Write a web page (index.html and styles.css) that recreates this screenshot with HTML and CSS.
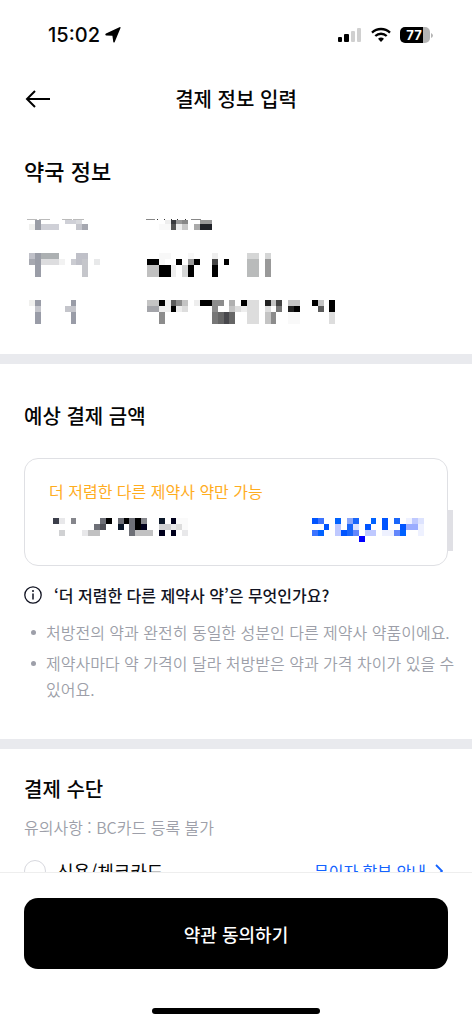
FILE: index.html
```html
<!DOCTYPE html>
<html lang="ko">
<head>
<meta charset="utf-8">
<meta name="viewport" content="width=device-width, initial-scale=1">
<title>결제 정보 입력</title>
<link rel="stylesheet" href="styles.css">
</head>
<body>
<div class="status">
  <div class="status-left">
    <span class="time">15:02</span>
    <svg width="16" height="16" viewBox="0 0 16 16" aria-hidden="true"><path d="M15.600.8 9.700 15Q9 16.200 8.300 15L7.400 8.800 1 8.400Q-.4 7.600 1 6.600L14.400.2Q15.800-.2 15.600.8Z"/></svg>
  </div>
  <div class="status-right">
    <svg width="24" height="16" viewBox="0 0 24 16" aria-hidden="true"><rect x="0" y="10" width="4" height="5" rx="1"/><rect x="6" y="7" width="5" height="8" rx="1"/><rect x="13" y="4" width="4" height="11" rx="1" fill="#d0d0d0"/><rect x="19" y="1" width="4" height="14" rx="1" fill="#d0d0d0"/></svg>
    <svg class="wifi" width="20" height="16" viewBox="0 0 20 16" fill="none" stroke="#000" stroke-width="2.3" aria-hidden="true"><path d="M1 5.6a13 13 0 0 1 18 0M4.3 9a8.3 8.3 0 0 1 11.4 0"/><path d="M7 11.8a4.5 4.5 0 0 1 6 0L10 15Z" fill="#000" stroke="none"/></svg>
    <div class="battery"><span>77</span></div>
    <svg width="2" height="5" viewBox="0 0 2 5" aria-hidden="true"><path d="M0 0q2 1 2 2.500T0 5Z" fill="#b5b5b5"/></svg>
  </div>
</div>
<header class="nav">
  <button class="back" type="button" aria-label="뒤로"><svg width="26" height="18" viewBox="0 0 26 18" fill="none" stroke="#000" stroke-width="2" aria-hidden="true"><path d="M25 9H2M10 1 2 9l8 8"/></svg></button>
  <h1>결제 정보 입력</h1>
</header>
<main>
  <section class="pharmacy">
    <h2 class="large">약국 정보</h2>
    <dl>
      <div>
        <dt><svg class="mosaic" width="120" height="24" viewBox="0 0 120 24" aria-hidden="true">
          <path fill="#bbb" d="M3 13h10v1H3zM15 13h11v1H15zM38 13h10v1H38zM49 13h11v1H49z"/>
          <path fill="#9a9da6" d="M11 14h6v10h-6z"/><path fill="#cfd0d7" d="M41 14h11v4H41zM17 18h18v6H17z"/><path fill="#d8d9dd" d="M52 14h6v4h-6z"/><path fill="#f0f0ef" d="M5 18h6v6H5z"/><path fill="#c4c5cc" d="M52 18h6v6h-6z"/><path fill="#a5a7b0" d="M58 18h6v6h-6z"/>
        </svg></dt>
        <dd><svg class="mosaic" width="200" height="24" viewBox="0 0 200 24" aria-hidden="true">
          <path fill="#888" d="M2 13h9v1H2zM47 13h10v1H47z"/><path fill="#333" d="M13 13h1v1h-1zM20 13h1v1h-1zM27 13h1v1h-1zM33 13h1v1h-1zM41 13h1v1h-1z"/>
          <path fill="#eee" d="M21 14h6v4h-6zM32 18h6v6h-6z"/><path fill="#38393d" d="M27 14h5v4h-5z"/><path fill="#999" d="M32 14h6v4h-6zM56 14h12v4H56z"/><path fill="#888" d="M38 14h6v4h-6z"/><path fill="#f9f9f9" d="M15 18h12v6H15z"/><path fill="#555" d="M27 18h5v6h-5z"/><path fill="#c8c8c8" d="M38 18h6v6h-6z"/><path fill="#aaa" d="M50 18h6v6h-6z"/><path fill="#202228" d="M56 18h12v6H56z"/>
        </svg></dd>
      </div>
      <div>
        <dt><svg class="mosaic" width="120" height="24" viewBox="0 0 120 24" aria-hidden="true">
          <path fill="#bfc0c8" d="M5 0h6v6H5zM52 0h12v6H52zM52 6h6v6h-6z"/><path fill="#9a9da7" d="M11 0h6v24h-6z"/><path fill="#acb0b2" d="M17 0h18v6H17z"/><path fill="#a6a8b0" d="M5 6h6v6H5z"/><path fill="#dddddf" d="M17 6h18v6H17z"/><path fill="#f2f2f2" d="M35 6h6v6h-6z"/><path fill="#cbccd2" d="M47 6h5v6h-5z"/><path fill="#c5c6cb" d="M58 6h6v18h-6z"/><path fill="#e8e9ea" d="M70 6h6v6h-6z"/>
        </svg></dt>
        <dd><svg class="mosaic" width="200" height="24" viewBox="0 0 200 24" aria-hidden="true">
          <path fill="#f8f8f8" d="M15 0h12v6H15zM44 0h6v6h-6zM15 6h6v6h-6z"/><path fill="#eee" d="M68 0h6v6h-6zM27 12h5v12h-5z"/><path fill="#d5d6d6" d="M103 0h12v6h-12zM121 0h6v6h-6zM38 12h6v12h-6z"/>
          <path d="M3 6h12v6H3zM32 6h6v6h-6zM50 6h6v6h-6zM80 6h5v6h-5zM15 12h12v12H15zM44 12h6v12h-6zM68 12h6v12h-6z"/><path fill="#999" d="M44 6h6v6h-6zM121 6h6v18h-6z"/><path fill="#444" d="M68 6h6v6h-6z"/><path fill="#b9bbbb" d="M103 6h12v18h-12z"/><path fill="#c0c0c0" d="M3 12h12v12H3z"/>
        </svg></dd>
      </div>
      <div>
        <dt><svg class="mosaic" width="120" height="24" viewBox="0 0 120 24" aria-hidden="true">
          <path fill="#f0f0ee" d="M5 0h6v6H5z"/><path fill="#999ca7" d="M11 0h6v6h-6zM47 0h5v6h-5zM11 12h6v12h-6zM47 12h5v12h-5z"/><path fill="#c4c5cb" d="M11 6h6v6h-6zM41 6h11v6H41z"/>
        </svg></dt>
        <dd><svg class="mosaic" width="200" height="24" viewBox="0 0 200 24" aria-hidden="true">
          <path fill="#c4c4c4" d="M3 0h12v6H3zM38 0h6v6h-6zM127 0h5v6h-5zM144 0h12v6h-12zM174 0h6v6h-6zM85 6h6v6h-6zM121 12h6v12h-6z"/>
          <path d="M15 0h6v6h-6zM56 0h12v6H56zM97 0h6v6h-6zM168 0h6v6h-6zM185 0h6v12h-6zM27 6h5v6h-5zM150 6h6v6h-6z"/>
          <path fill="#eee" d="M21 0h6v6h-6zM50 0h6v6h-6zM15 6h12v6H15zM32 6h6v6h-6zM97 6h6v6h-6z"/><path fill="#5c5c5c" d="M27 0h5v6h-5zM174 6h6v6h-6z"/><path fill="#8c8c8c" d="M32 0h6v6h-6zM68 0h6v12h-6zM74 0h6v6h-6zM15 12h6v12h-6zM127 12h5v12h-5z"/><path fill="#b0b0b0" d="M85 0h6v6h-6z"/><path fill="#ddd" d="M103 0h12v24h-12zM38 6h6v6h-6zM91 6h6v6h-6zM121 6h6v6h-6zM185 12h6v12h-6z"/><path fill="#222" d="M121 0h6v6h-6zM144 6h6v6h-6z"/><path fill="#444" d="M132 0h6v6h-6z"/><path fill="#a4a5aa" d="M3 6h12v6H3z"/><path fill="#777" d="M132 6h6v6h-6zM68 12h6v12h-6z"/><path fill="#666" d="M74 12h6v12h-6zM85 12h6v12h-6z"/><path fill="#48484c" d="M80 12h5v12h-5z"/><path fill="#f9f9f9" d="M144 12h12v12h-12z"/>
        </svg></dd>
      </div>
    </dl>
  </section>
  <section class="amount">
    <h2>예상 결제 금액</h2>
    <div class="card">
      <p class="notice">더 저렴한 다른 제약사 약만 가능</p>
      <div class="price">
        <svg class="mosaic" width="140" height="24" viewBox="49 0 140 24" aria-hidden="true">
          <path fill="#3c3f4b" d="M53 0h6v6h-6z"/><path fill="#e8e8ea" d="M59 0h6v6h-6zM171 6h5v6h-5zM82 12h6v6h-6zM182 12h6v6h-6z"/><path fill="#85868c" d="M71 0h5v6h-5zM141 0h6v6h-6z"/><path fill="#6e7077" d="M100 0h6v6h-6zM118 0h6v6h-6zM129 0h6v18h-6zM94 6h6v6h-6z"/><path d="M106 0h6v6h-6zM124 0h5v6h-5zM135 0h6v12h-6z"/><path fill="#0b1729" d="M159 0h6v6h-6zM118 6h6v6h-6z"/><path fill="#00001c" d="M171 0h5v6h-5zM141 6h6v6h-6zM159 12h6v6h-6zM171 12h5v6h-5z"/><path fill="#505158" d="M100 6h6v6h-6z"/><path fill="#d0d1d3" d="M159 6h12v6h-12zM59 12h6v6h-6z"/><path fill="#ddd" d="M176 6h6v6h-6z"/><path fill="#c1c1c2" d="M88 12h12v6H88zM135 12h18v6h-18z"/><path fill="#fafafa" d="M182 0h6v12h-6zM176 0h6v6h-6z"/>
        </svg>
        <svg class="mosaic" width="112" height="24" viewBox="312 0 112 24" aria-hidden="true">
          <path fill="#0054ff" d="M312 0h6v6h-6zM382 0h6v12h-6zM324 6h5v6h-5zM365 6h6v6h-6zM400 6h6v6h-6zM341 12h6v6h-6z"/><path fill="#3c74ff" d="M318 0h6v6h-6zM312 12h6v6h-6z"/><path fill="#0062ff" d="M335 0h6v6h-6zM371 0h5v6h-5zM318 12h6v6h-6zM400 12h6v6h-6z"/><path fill="#8ea8f8" d="M347 0h6v6h-6z"/><path fill="#1a66fa" d="M353 0h6v6h-6zM394 0h6v6h-6zM347 6h6v12h-6z"/><path fill="#eef1ff" d="M406 0h6v6h-6zM418 6h6v12h-6zM382 12h12v6h-12z"/><path fill="#bfc9ff" d="M412 0h6v6h-6zM335 6h6v12h-6zM365 12h11v6h-11z"/><path fill="#dde3fe" d="M418 0h6v6h-6zM353 6h6v6h-6z"/><path fill="#9aacff" d="M406 6h12v6h-12z"/><path fill="#6286fc" d="M353 12h6v6h-6zM394 12h6v6h-6z"/><path fill="#00f" d="M359 18h6v6h-6z"/>
        </svg>
      </div>
      <span class="handle"></span>
    </div>
    <h3><svg width="18" height="18" viewBox="0 0 18 18" fill="none" stroke="#111322" stroke-width="1.300" aria-hidden="true"><circle cx="9" cy="9" r="8.200"/><path d="M9 7.500v6" stroke-width="1.500"/><circle cx="9" cy="5" r="1" fill="#111322" stroke="none"/></svg>‘더 저렴한 다른 제약사 약’은 무엇인가요?</h3>
    <ul>
      <li>처방전의 약과 완전히 동일한 성분인 다른 제약사 약품이에요.</li>
      <li>제약사마다 약 가격이 달라 처방받은 약과 가격 차이가 있을 수 있어요.</li>
    </ul>
  </section>
  <section class="method">
    <h2>결제 수단</h2>
    <p class="caution">유의사항 : BC카드 등록 불가</p>
    <div class="option">
      <input type="radio" name="method" id="credit">
      <label for="credit">신용/체크카드</label>
      <a href="#installment">무이자 할부 안내<svg width="8" height="14" viewBox="0 0 8 14" fill="none" stroke="#1463ff" stroke-width="1.800" aria-hidden="true"><path d="m1 1 6 6-6 6"/></svg></a>
    </div>
  </section>
</main>
<footer>
  <button class="agree" type="button">약관 동의하기</button>
  <div class="home"></div>
</footer>
</body>
</html>
```
FILE: styles.css
```css
* { box-sizing: border-box; margin: 0; padding: 0; }
body {
  display: flex;
  flex-direction: column;
  height: 100vh;
  background: #fff;
  color: #050505;
  font-family: "Noto Sans CJK KR", sans-serif;
  font-size: 16px;
  line-height: 24px;
}
svg { display: block; flex: none; }
button { border: 0; background: none; font: inherit; cursor: pointer; }

.status {
  display: flex;
  justify-content: space-between;
  flex: none;
  height: 70px;
  padding: 23px 39px 0 48px;
}
.status-left, .status-right { display: flex; align-items: center; height: 24px; }
.status-left { gap: 5px; }
.time { font-family: Inter, sans-serif; font-size: 20px; font-weight: 500; }
.wifi { margin: 0 9px; }
.battery {
  width: 30px;
  height: 16px;
  padding-right: 2px;
  border-radius: 5px;
  background: linear-gradient(to right, #000 77%, #b5b5b5 77%);
  color: #fff;
  font: 700 13px/16px Inter, sans-serif;
  text-align: center;
}
.battery + svg { margin-left: 1px; }

.nav {
  display: grid;
  grid-template-columns: 28px 1fr 28px;
  align-items: center;
  flex: none;
  height: 58px;
  padding: 0 24px;
}
.back { padding: 4px 0 4px 1px; }
h1 { font-size: 20px; font-weight: 500; line-height: 32px; text-align: center; }

main { flex: 1; min-height: 0; overflow: hidden; }
section { padding: 0 24px; }
section + section { border-top: 10px solid #e9eaee; }
h2 { font-size: 20px; font-weight: 500; line-height: 32px; }
.large { font-size: 22px; }

.pharmacy { padding-top: 26px; padding-bottom: 30px; }
dl { display: grid; gap: 23px; margin-top: 20px; }
dl > div { display: grid; grid-template-columns: 120px 1fr; }
.mosaic { shape-rendering: crispEdges; }

.amount { padding-top: 36px; padding-bottom: 37px; }
.card {
  position: relative;
  margin-top: 26px;
  padding: 20px 23px 23px 24px;
  border: 1px solid #dfe0e4;
  border-radius: 14px;
}
.notice { color: #ffad1f; }
.price { display: flex; justify-content: space-between; margin-top: 15px; }
.handle { position: absolute; top: 51px; right: -6px; width: 6px; height: 41px; background: #e0e0e5; }
h3 {
  display: flex;
  align-items: center;
  gap: 12px;
  margin-top: 17px;
  color: #111322;
  font-size: 16px;
  font-weight: 500;
}
ul { display: grid; gap: 5px; margin: 12px -12px 0 0; list-style: none; }
li { display: flex; color: #9d9fa9; font-weight: 350; line-height: 26px; }
li::before {
  content: "";
  flex: none;
  width: 5px;
  height: 5px;
  margin: 11px 10px 0 7px;
  border-radius: 50%;
  background: #9d9fa9;
}

.method { padding-top: 24px; }
.caution { margin-top: 10px; color: #9d9fa9; font-weight: 350; }
.option { display: flex; align-items: center; margin-top: 20px; font-size: 18px; }
.option input {
  appearance: none;
  width: 22px;
  height: 22px;
  margin-right: 11px;
  border: 1px solid #d7d8de;
  border-radius: 50%;
}
.option a {
  display: flex;
  align-items: center;
  gap: 9px;
  margin-left: auto;
  padding-right: 5px;
  color: #1463ff;
  font-size: 16px;
  text-decoration: none;
}

footer {
  flex: none;
  padding: 25px 24px 10px;
  border-top: 1px solid #eee;
  background: #fff;
}
.agree {
  display: block;
  width: 100%;
  height: 71px;
  border-radius: 14px;
  background: #000;
  color: #fff;
  font-size: 18px;
  font-weight: 500;
}
.home { width: 168px; height: 6px; margin: 39px auto 0; border-radius: 3px; background: #000; }
```
